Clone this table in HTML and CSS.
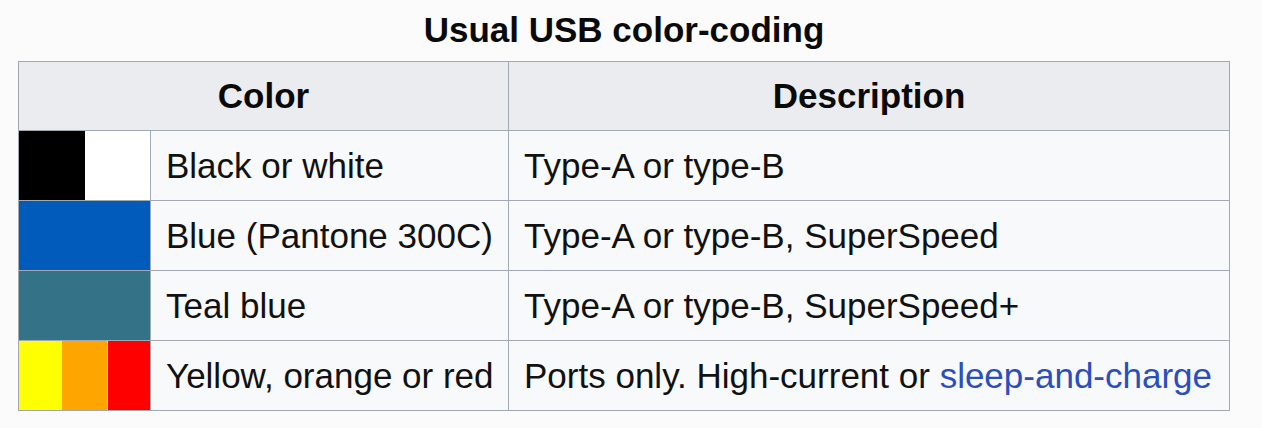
FILE: index.html
```html
<!DOCTYPE html>
<html lang="en">
<head>
<meta charset="utf-8">
<title>Usual USB color-coding</title>
<link rel="stylesheet" href="styles.css">
</head>
<body>
<table class="wikitable">
  <caption class="caption">Usual USB color-coding</caption>
  <colgroup>
    <col class="col-swatch">
    <col class="col-name">
    <col class="col-desc">
  </colgroup>
  <thead>
    <tr class="head-row">
      <th colspan="2">Color</th>
      <th>Description</th>
    </tr>
  </thead>
  <tbody>
    <tr>
      <td class="swatch"><div class="swatch-strip"><span class="sw sw-black"></span><span class="sw sw-white"></span></div></td>
      <td class="name">Black or white</td>
      <td class="desc">Type-A or type-B</td>
    </tr>
    <tr>
      <td class="swatch"><div class="swatch-strip"><span class="sw sw-blue"></span></div></td>
      <td class="name">Blue (Pantone 300C)</td>
      <td class="desc">Type-A or type-B, SuperSpeed</td>
    </tr>
    <tr>
      <td class="swatch"><div class="swatch-strip"><span class="sw sw-teal"></span></div></td>
      <td class="name">Teal blue</td>
      <td class="desc">Type-A or type-B, SuperSpeed+</td>
    </tr>
    <tr>
      <td class="swatch"><div class="swatch-strip"><span class="sw sw-yellow"></span><span class="sw sw-orange"></span><span class="sw sw-red"></span></div></td>
      <td class="name">Yellow, orange or red</td>
      <td class="desc">Ports only. High-current or <a class="link" href="#">sleep-and-charge</a></td>
    </tr>
  </tbody>
</table>
</body>
</html>
```

FILE: styles.css
```css
html, body {
  margin: 0;
  padding: 0;
  background: #fbfbfb;
}

body {
  padding: 10px 0 0 18px;
  font-family: "Liberation Sans", Arial, sans-serif;
  color: #111;
}

.wikitable {
  border-collapse: collapse;
  table-layout: fixed;
  width: 1211px;
  font-size: 35px;
  background: #f8f9fa;
  border: 1px solid #8f959c;
}

.caption {
  font-weight: bold;
  font-size: 35px;
  line-height: 40px;
  padding-bottom: 11px;
  text-align: center;
  color: #0a0a0a;
}

.col-swatch { width: 132px; }
.col-name { width: 358px; }
.col-desc { width: 721px; }

.wikitable th,
.wikitable td {
  border: 1px solid #a2a9b1;
  padding: 0 15px;
  text-align: left;
  vertical-align: middle;
  white-space: nowrap;
}

.head-row th {
  background: #eaecf0;
  font-weight: bold;
  text-align: center;
  height: 68px;
  color: #0a0a0a;
}

.wikitable tbody td {
  height: 69px;
}

.wikitable td.swatch {
  padding: 0;
  height: 69px;
}

.swatch-strip {
  display: flex;
  height: 69px;
}

.sw {
  flex: 1 1 0;
}

.sw-black { background: #000; }
.sw-white { background: #fff; }
.sw-blue { background: #005bbb; }
.sw-teal { background: #347387; }
.sw-yellow { background: #ffff00; flex-basis: 43px; flex-grow: 0; }
.sw-orange { background: #ffa500; flex-basis: 45px; flex-grow: 0; border-right: 1px solid #f3d9b0; }
.sw-red { background: #ff0000; }

.link {
  color: #2a4fbd;
  text-decoration: none;
}
```
